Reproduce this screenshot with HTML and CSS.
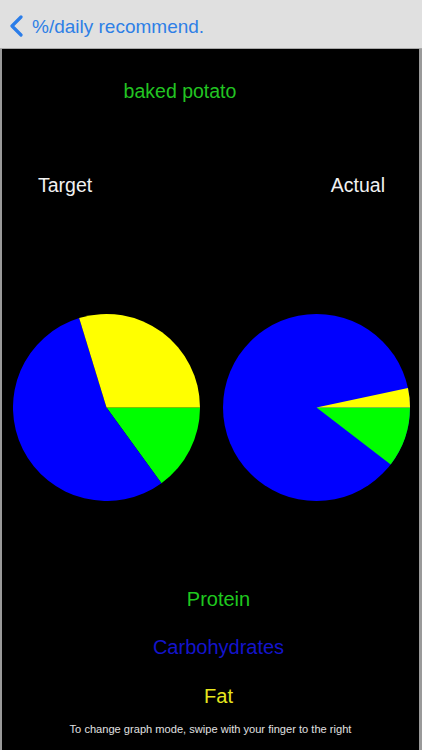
FILE: index.html
```html
<!DOCTYPE html>
<html>
<head>
<meta charset="utf-8">
<link rel="stylesheet" href="styles.css">
</head>
<body>
<header class="nav">
  <svg class="chev" width="16" height="22" viewBox="0 0 16 22"><polyline points="13,2 4,11 13,20" fill="none" stroke="#2b7de9" stroke-width="3.2" stroke-linecap="round" stroke-linejoin="round"/></svg>
  <span class="back">%/daily recommend.</span>
</header>
<main class="screen">
  <div class="title">baked potato</div>
  <div class="heads"><span>Target</span><span>Actual</span></div>
  <div class="pies">
    <svg class="pie" width="187" height="187" viewBox="0 0 187 187">
      <path d="M93.5,93.5 L187,93.5 A93.5,93.5 0 0 1 148.46,169.14 Z" fill="#00ff00"/>
      <path d="M93.5,93.5 L148.46,169.14 A93.5,93.5 0 1 1 66.16,4.09 Z" fill="#0000ff"/>
      <path d="M93.5,93.5 L66.16,4.09 A93.5,93.5 0 0 1 187,93.5 Z" fill="#ffff00"/>
    </svg>
    <svg class="pie" width="187" height="187" viewBox="0 0 187 187">
      <circle cx="93.5" cy="93.5" r="93.5" fill="#0000ff"/>
      <path d="M93.5,93.5 L187,93.5 A93.5,93.5 0 0 1 167.68,150.42 Z" fill="#00ff00"/>
      <path d="M93.5,93.5 L184.96,74.06 A93.5,93.5 0 0 1 187,93.5 Z" fill="#ffff00"/>
    </svg>
  </div>
  <div class="legend">
    <div class="item protein">Protein</div>
    <div class="item carbs">Carbohydrates</div>
    <div class="item fat">Fat</div>
  </div>
  <div class="hint">To change graph mode, swipe with your finger to the right</div>
</main>
</body>
</html>
```
FILE: styles.css
```css
html, body {
  margin: 0;
  padding: 0;
  background: #000;
}
body {
  width: 422px;
  height: 750px;
  overflow: hidden;
  font-family: "Liberation Sans", Arial, sans-serif;
}
.nav {
  height: 48px;
  background: #e0e0e0;
  border-bottom: 1px solid #a8a8a8;
  display: flex;
  align-items: center;
  padding-left: 8px;
  box-sizing: content-box;
}
.chev {
  display: block;
  margin-top: 4px;
}
.back {
  font-size: 19px;
  color: #2e7fe6;
  margin-left: 8px;
  padding-top: 5px;
}
.screen {
  height: 701px;
  background: #000;
  border-left: 2px solid #9a9a9a;
  border-right: 3px solid #9a9a9a;
  display: flex;
  flex-direction: column;
}
.title {
  margin-top: 29.5px;
  padding-right: 61px;
  text-align: center;
  font-size: 19.5px;
  line-height: 24px;
  color: #22c422;
}
.heads {
  margin-top: 70px;
  display: flex;
  justify-content: space-between;
  padding: 0 34px 0 36px;
  font-size: 19.5px;
  line-height: 24px;
  color: #f2f2f2;
}
.pies {
  margin-top: 117.5px;
  display: flex;
  gap: 23px;
  padding-left: 10.5px;
}
.pie {
  display: block;
}
.legend {
  margin-top: 86px;
  padding-left: 16px;
  display: flex;
  flex-direction: column;
  gap: 24px;
  text-align: center;
  font-size: 20px;
  line-height: 24px;
}
.protein { color: #1fc81f; }
.carbs { color: #1414cc; }
.fat { color: #e6e61e; margin-top: 1px; }
.hint {
  margin-top: 14px;
  text-align: center;
  font-size: 11.1px;
  line-height: 14px;
  color: #e0e0e0;
}
```
